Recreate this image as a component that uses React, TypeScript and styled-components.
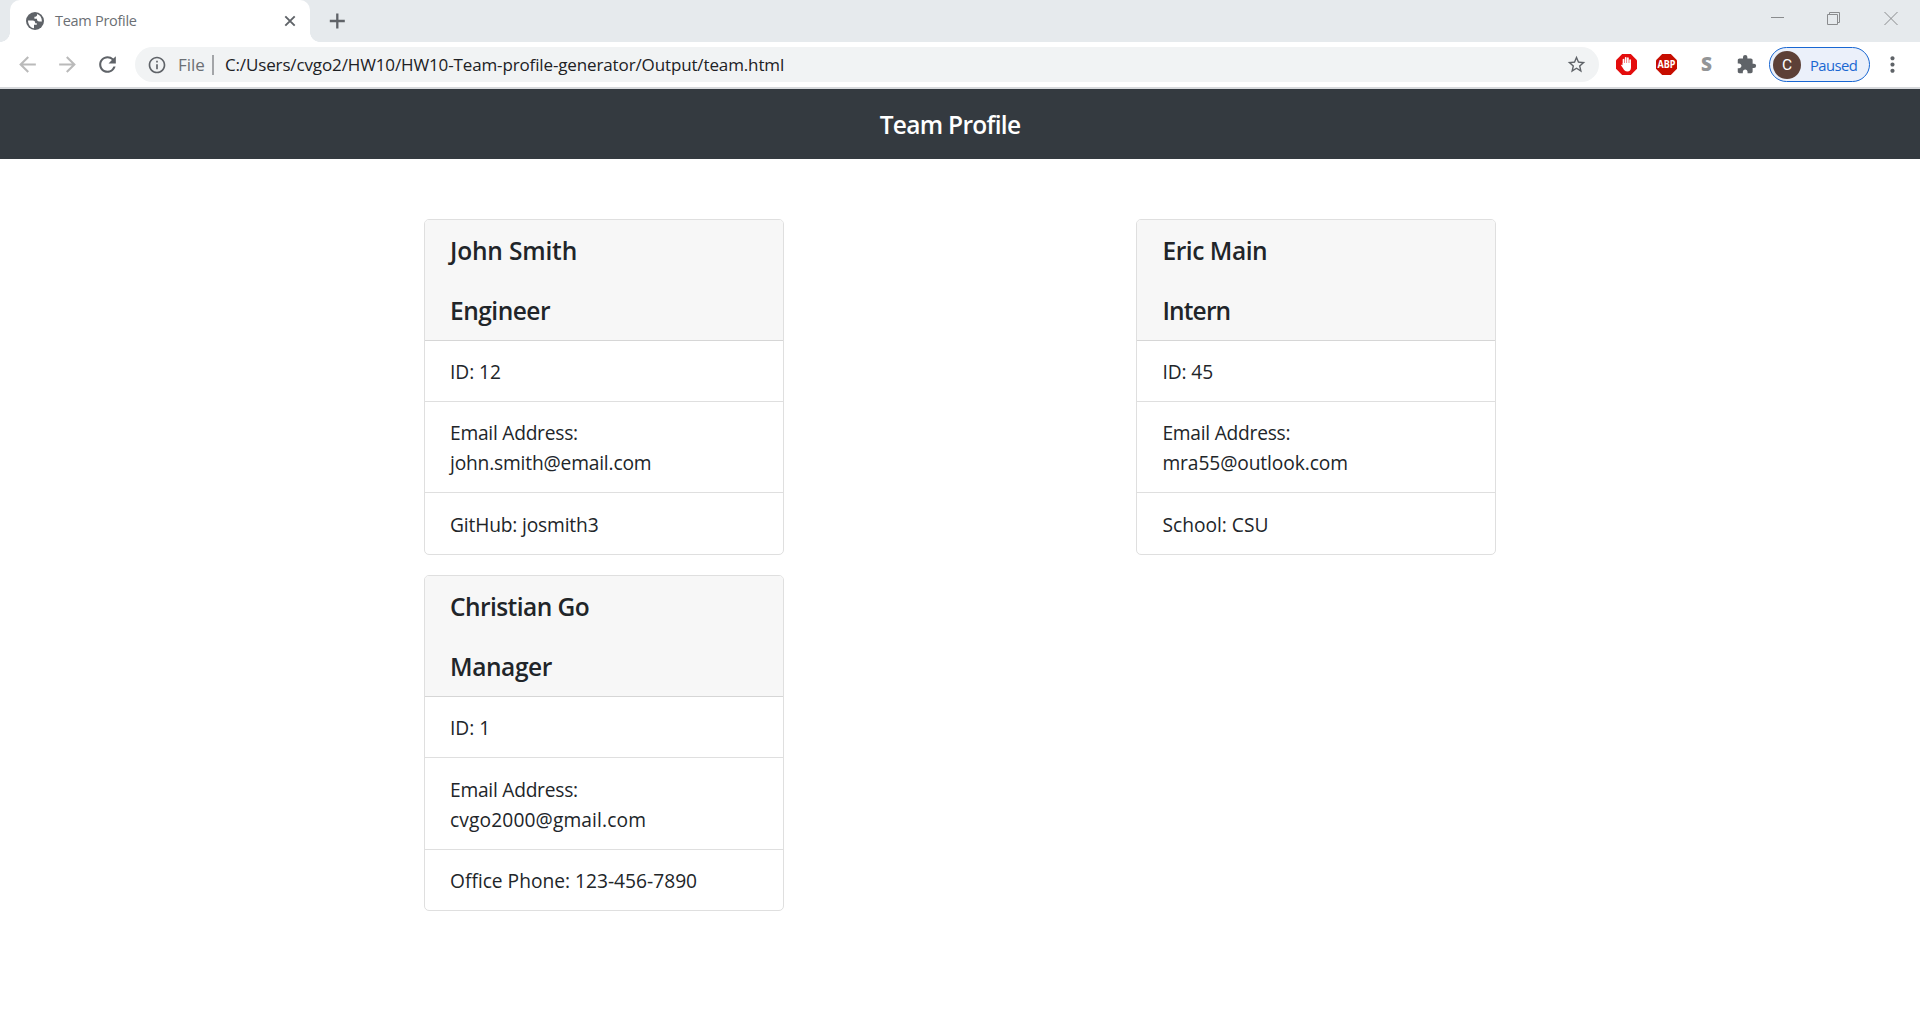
import React from "react";
import styled, { createGlobalStyle } from "styled-components";
import { MdArrowBack, MdArrowForward, MdRefresh, MdInfoOutline, MdStarBorder, MdExtension, MdMoreVert } from "react-icons/md";

const uiFont = `"Open Sans", "Noto Sans", sans-serif`;

const Global = createGlobalStyle`
  * { box-sizing: border-box; }
  html, body { margin: 0; background: #fff; }
  body { font-family: ${uiFont}; color: #212529; overflow: hidden; }
`;

const Window = styled.div`
  width: 1920px;
  height: 1030px;
  display: flex;
  flex-direction: column;
`;

const TabStrip = styled.div`
  height: 42px;
  background: #e6eaed;
  display: flex;
  align-items: flex-end;
`;

const TabFoot = styled.div<{ $side: "left" | "right" }>`
  width: 10px;
  height: 42px;
  background: radial-gradient(circle at ${(p) => (p.$side === "left" ? "0" : "100%")} 0, transparent 9.6px, #fff 10.2px) 0 100% / 10px 10px no-repeat;
`;

const Tab = styled.div`
  width: 300px;
  height: 42px;
  padding: 0 14px 0 15px;
  background: #fff;
  border-radius: 10px 10px 0 0;
  display: flex;
  align-items: center;
  svg { display: block; flex: none; }
`;

const Label = styled.span<{ $size: number; $spacing?: number; $color?: string; $weight?: number }>`
  font-size: ${(p) => p.$size}px;
  letter-spacing: ${(p) => p.$spacing ?? 0}px;
  color: ${(p) => p.$color ?? "inherit"};
  font-weight: ${(p) => p.$weight ?? 400};
  white-space: nowrap;
`;

const TabTitle = styled(Label)`
  flex: 1;
  margin-left: 10px;
  padding-bottom: 2px;
`;

const NewTab = styled.div`
  width: 30px;
  height: 42px;
  margin-left: 2px;
  display: flex;
  align-items: center;
  justify-content: center;
`;

const WindowControls = styled.div`
  margin-left: auto;
  height: 42px;
  padding-right: 22px;
  display: flex;
  gap: 44px;
  align-items: flex-start;
  svg { display: block; margin-top: 7px; }
`;

const Toolbar = styled.div`
  height: 47px;
  padding: 5px 14px 5px 15px;
  border-bottom: 2px solid #d7d9dc;
  display: flex;
  align-items: flex-start;
`;

const NavButtons = styled.div`
  height: 35px;
  width: 120px;
  display: flex;
  align-items: center;
  gap: 15px;
  svg { flex: none; }
`;

const AddressBar = styled.div`
  width: 1464px;
  height: 35px;
  padding: 0 12px;
  border-radius: 18px;
  background: #f1f3f4;
  display: flex;
  align-items: center;
  svg { flex: none; }
`;

const Scheme = styled(Label)`
  margin-left: 11px;
`;

const Divider = styled.div`
  width: 2px;
  height: 20px;
  margin: 0 11px 0 7px;
  background: #a3a5a8;
`;

const Url = styled(Label)`
  flex: 1;
`;

const Extensions = styled.div`
  height: 35px;
  margin-left: 17px;
  display: flex;
  align-items: center;
  gap: 19px;
  svg { flex: none; display: block; overflow: visible; }
`;

const SLetter = styled.div`
  width: 21px;
  text-align: center;
  font: 800 19px/35px ${uiFont};
  color: #939597;
`;

const Profile = styled.div`
  width: 101px;
  height: 35px;
  margin: 0 10px 0 12px;
  padding-left: 3px;
  border: 1.5px solid #1967d2;
  border-radius: 18px;
  background: #ebf0fa;
  display: flex;
  align-items: center;
  gap: 9px;
`;

const Avatar = styled.div`
  width: 28px;
  height: 28px;
  border-radius: 50%;
  background: #5d4037;
  color: #fff;
  font: 400 15.5px/28px Roboto, sans-serif;
  text-align: center;
`;

const MenuButton = styled.div`
  height: 35px;
  display: flex;
  align-items: center;
`;

const Navbar = styled.header`
  height: 70px;
  padding-right: 20px;
  background: #343a40;
  color: #fff;
  display: flex;
  align-items: center;
  justify-content: center;
`;

const Team = styled.main`
  padding: 60px 0 0 424px;
  display: grid;
  grid-template-columns: 360px 360px;
  column-gap: 352.45px;
  row-gap: 20px;
`;

const Card = styled.article`
  height: 336px;
  border: 1px solid #dfdfdf;
  border-radius: 5px;
  overflow: hidden;
  display: flex;
  flex-direction: column;
`;

const CardHeader = styled.div`
  flex: none;
  height: 121px;
  padding: 1px 0 0 25px;
  background: #f7f7f7;
  border-bottom: 1px solid #d6d6d6;
`;

const Heading = styled.h5<{ $spacing: number }>`
  margin: 0;
  font-size: 24.5px;
  line-height: 60px;
  font-weight: 600;
  letter-spacing: ${(p) => p.$spacing}px;
  white-space: nowrap;
`;

const Row = styled.div<{ $top: number }>`
  padding: ${(p) => p.$top}px 0 14px 25px;
  line-height: 30px;
  & + & { border-top: 1px solid #dfdfdf; }
`;

const Line = styled(Label)`
  display: block;
`;

type Text = [string, number];
const members: { heads: Text[]; rows: { top: number; lines: Text[] }[] }[] = [
  {
    heads: [["John Smith", -0.17], ["Engineer", -0.5]],
    rows: [
      { top: 16, lines: [["ID: 12", -0.05]] },
      { top: 16, lines: [["Email Address:", -0.25], ["john.smith@email.com", -0.18]] },
      { top: 17, lines: [["GitHub: josmith3", -0.16]] },
    ],
  },
  {
    heads: [["Eric Main", -0.45], ["Intern", -0.85]],
    rows: [
      { top: 16, lines: [["ID: 45", -0.1]] },
      { top: 16, lines: [["Email Address:", -0.25], ["mra55@outlook.com", -0.1]] },
      { top: 17, lines: [["School: CSU", 0]] },
    ],
  },
  {
    heads: [["Christian Go", -0.56], ["Manager", -0.42]],
    rows: [
      { top: 16, lines: [["ID: 1", 0]] },
      { top: 17, lines: [["Email Address:", -0.25], ["cvgo2000@gmail.com", 0.12]] },
      { top: 16, lines: [["Office Phone: 123-456-7890", 0]] },
    ],
  },
];

const octagon = "M6.2 0h8.6L21 6.2v8.6L14.8 21H6.2L0 14.8V6.2z";

export default function App() {
  return (
    <Window>
      <Global />
      <TabStrip>
        <TabFoot $side="left" />
        <Tab>
          <svg width="20" height="20" viewBox="0 0 20 20">
            <circle cx="10" cy="10" r="9" fill="#5f6368" />
            <path d="M3 9.600h4.600c2 0 2.600 1 2.600 2.600h1.600v1.600H9v3.400C5.500 17 3 13.500 3 9.600zM12 3v1.500c-.5 1-1.200 1.200-2.600 1.200v2h2.500c0 2 .8 2.700 2.300 2.700h2.700C17 6.500 15 4 12 3z" fill="#fff" />
          </svg>
          <TabTitle $size={14.5} $spacing={-0.28} $color="#6b6f74">Team Profile</TabTitle>
          <svg width="12" height="12" viewBox="0 0 12 12" stroke="#5f6368" strokeWidth="1.900"><path d="M1.300 1.300l9.400 9.400M10.700 1.300l-9.400 9.400" /></svg>
        </Tab>
        <TabFoot $side="right" />
        <NewTab>
          <svg width="16" height="16" viewBox="0 0 16 16" stroke="#5f6368" strokeWidth="2.300"><path d="M8.300 .5v15M.8 8h15" /></svg>
        </NewTab>
        <WindowControls>
          <svg width="13" height="15" viewBox="-1 0 13 15" stroke="#8a8c8e" overflow="visible"><path d="M0 10.500h13" /></svg>
          <svg width="13" height="18" viewBox="0 0 13 18" stroke="#8a8c8e" fill="none"><path d="M.5 7.500h10v10H.5zM2.500 7V5.500h10v10H11" /></svg>
          <svg width="14" height="18" viewBox="0 0 14 18" stroke="#8a8c8e"><path d="M.5 5l13 13M13.500 5l-13 13" /></svg>
        </WindowControls>
      </TabStrip>
      <Toolbar>
        <NavButtons>
          <MdArrowBack size={25} color="#bababa" />
          <MdArrowForward size={25} color="#bababa" />
          <MdRefresh size={25} color="#5f6368" />
        </NavButtons>
        <AddressBar>
          <MdInfoOutline size={20} color="#5f6368" />
          <Scheme $size={17} $color="#6b6f74">File</Scheme>
          <Divider />
          <Url $size={17} $spacing={-0.13} $color="#202124">C:/Users/cvgo2/HW10/HW10-Team-profile-generator/Output/team.html</Url>
          <MdStarBorder size={21} color="#5f6368" />
        </AddressBar>
        <Extensions>
          <svg width="21" height="21" viewBox="0 0 21 21">
            <path d={octagon} fill="#e40d0d" />
            <path d="M7.500 11V5.500M9.700 10V3.800M11.900 10V4M14.100 11V6" stroke="#fff" strokeWidth="1.700" strokeLinecap="round" />
            <path d="M6.700 9h8.300v4.500c0 2.500-1.500 4-3.500 4-2.500 0-3.500-1.200-4.500-3.200L5 11.200c.6-.8 1.300-.3 1.700.3z" fill="#fff" />
          </svg>
          <svg width="21" height="21" viewBox="0 0 21 21">
            <path d={octagon} fill="#c70d00" />
            <text x="1.500" y="14.300" textLength="18" lengthAdjust="spacingAndGlyphs" fontFamily="Open Sans, sans-serif" fontWeight="700" fontSize="10.500" fill="#fff">ABP</text>
          </svg>
          <SLetter>S</SLetter>
          <MdExtension size={21} color="#5f6368" />
        </Extensions>
        <Profile>
          <Avatar>C</Avatar>
          <Label $size={14.8} $spacing={-0.55} $color="#1967d2">Paused</Label>
        </Profile>
        <MenuButton>
          <MdMoreVert size={25} color="#5f6368" />
        </MenuButton>
      </Toolbar>
      <Navbar>
        <Label as="h1" $size={24.5} $spacing={-0.7} $weight={600}>Team Profile</Label>
      </Navbar>
      <Team>
        {members.map((m) => (
          <Card key={m.heads[0][0]}>
            <CardHeader>
              {m.heads.map(([text, spacing]) => <Heading key={text} $spacing={spacing}>{text}</Heading>)}
            </CardHeader>
            {m.rows.map((row) => (
              <Row key={row.lines[0][0]} $top={row.top}>
                {row.lines.map(([text, spacing]) => <Line key={text} $size={19.2} $spacing={spacing}>{text}</Line>)}
              </Row>
            ))}
          </Card>
        ))}
      </Team>
    </Window>
  );
}
